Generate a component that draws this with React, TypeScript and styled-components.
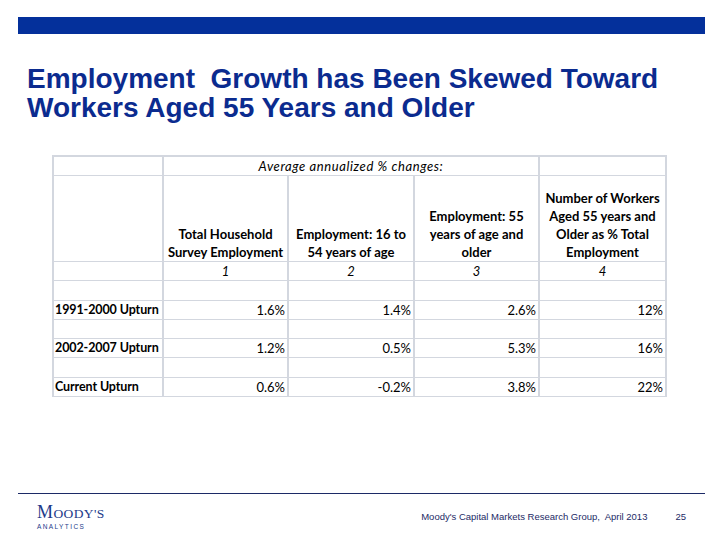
import React from "react";
import styled, { createGlobalStyle } from "styled-components";

const GlobalStyle = createGlobalStyle`
  html, body { margin: 0; padding: 0; background: #ffffff; }
  body { width: 720px; height: 540px; overflow: hidden; }
`;

const NAVY = "#0b2b8f";
const GRID = "#d3d7df";

const headers = [
  ["Total Household", "Survey Employment"],
  ["Employment: 16 to", "54 years of age"],
  ["Employment: 55", "years of age and", "older"],
  ["Number of Workers", "Aged 55 years and", "Older as % Total", "Employment"],
];

const rows = [
  { label: "1991-2000 Upturn", values: ["1.6%", "1.4%", "2.6%", "12%"] },
  { label: "2002-2007 Upturn", values: ["1.2%", "0.5%", "5.3%", "16%"] },
  { label: "Current Upturn", values: ["0.6%", "-0.2%", "3.8%", "22%"] },
];

export default function App() {
  return (
    <>
      <GlobalStyle />
      <Slide>
        <TopBar />
        <Title>
          Employment&nbsp; Growth has Been Skewed Toward
          <br />
          Workers Aged 55 Years and Older
        </Title>

        <Table>
          <colgroup>
            <col style={{ width: 110 }} />
            <col style={{ width: 125 }} />
            <col style={{ width: 126 }} />
            <col style={{ width: 125 }} />
            <col style={{ width: 127 }} />
          </colgroup>
          <tbody>
            <Row>
              <Cell />
              <Cell colSpan={3} $align="center" $italic $wide>
                Average annualized % changes:
              </Cell>
              <Cell />
            </Row>
            <HeadRow>
              <Cell />
              {headers.map((lines, i) => (
                <Cell key={i} $align="center" $bold $valign="bottom">
                  {lines.map((l, j) => (
                    <div key={j}>{l}</div>
                  ))}
                </Cell>
              ))}
            </HeadRow>
            <Row>
              <Cell />
              {[1, 2, 3, 4].map((n) => (
                <Cell key={n} $align="center" $italic>
                  {n}
                </Cell>
              ))}
            </Row>
            {rows.map((r) => (
              <React.Fragment key={r.label}>
                <Row>
                  <Cell />
                  <Cell />
                  <Cell />
                  <Cell />
                  <Cell />
                </Row>
                <Row>
                  <Label>{r.label}</Label>
                  {r.values.map((v, i) => (
                    <Cell key={i} $align="right">
                      {v}
                    </Cell>
                  ))}
                </Row>
              </React.Fragment>
            ))}
          </tbody>
        </Table>

        <Footer>
          <Logo>
            <LogoMark>
              M<small>OODY'S</small>
            </LogoMark>
            <LogoSub>ANALYTICS</LogoSub>
          </Logo>
          <FooterText>Moody's Capital Markets Research Group,&nbsp; April 2013</FooterText>
          <PageNum>25</PageNum>
        </Footer>
      </Slide>
    </>
  );
}

const Slide = styled.div`
  width: 720px;
  height: 540px;
  display: flex;
  flex-direction: column;
  font-family: "Liberation Sans", Arial, sans-serif;
`;

const TopBar = styled.div`
  margin: 17px 15px 0 18px;
  height: 17px;
  background: #04309b;
`;

const Title = styled.h1`
  margin: 30px 0 0 27px;
  font-family: "Liberation Sans", Arial, sans-serif;
  font-weight: bold;
  font-size: 28px;
  line-height: 29px;
  color: ${NAVY};
  letter-spacing: 0;
`;

const Table = styled.table`
  margin: 33px 0 0 52px;
  border-collapse: collapse;
  table-layout: fixed;
  width: 613px;
  font-family: Lato, "Liberation Sans", sans-serif;
  font-size: 13px;
  color: #000;
  border-top: 2px solid ${GRID};
`;

const Row = styled.tr`
  height: 19.3px;
`;

const HeadRow = styled.tr`
  height: 86px;
`;

const Cell = styled.td<{
  $align?: "left" | "center" | "right";
  $bold?: boolean;
  $italic?: boolean;
  $wide?: boolean;
  $valign?: "middle" | "bottom";
}>`
  padding: 0 2px;
  border-left: 2px solid ${GRID};
  border-right: 2px solid ${GRID};
  border-top: 1px solid ${GRID};
  border-bottom: 1px solid ${GRID};
  text-align: ${(p) => p.$align || "left"};
  font-weight: ${(p) => (p.$bold ? 700 : 400)};
  font-style: ${(p) => (p.$italic ? "italic" : "normal")};
  letter-spacing: ${(p) => (p.$wide ? "0.6px" : "normal")};
  vertical-align: ${(p) => p.$valign || "middle"};
  line-height: 18px;
  white-space: nowrap;
  overflow: hidden;
`;

const Label = styled(Cell)`
  font-weight: 700;
  font-size: 12.5px;
  letter-spacing: -0.1px;
  padding-left: 1px;
`;

const Footer = styled.div`
  margin: auto 15px 0 18px;
  height: 46px;
  border-top: 1px solid #1c2a66;
  display: flex;
  align-items: flex-start;
`;

const Logo = styled.div`
  margin: 9px 0 0 19px;
  display: flex;
  flex-direction: column;
  color: #1d3a8a;
`;

const LogoMark = styled.div`
  font-family: "Liberation Serif", "Times New Roman", serif;
  font-size: 18px;
  line-height: 18px;
  letter-spacing: 0.4px;
  small {
    font-size: 13.5px;
  }
`;

const LogoSub = styled.div`
  margin-top: 0;
  font-family: "Liberation Sans", Arial, sans-serif;
  font-size: 6.5px;
  letter-spacing: 1.4px;
  color: #1d3a8a;
`;

const FooterText = styled.div`
  margin: 17px 0 0 auto;
  font-size: 9.5px;
  color: #1c2a66;
`;

const PageNum = styled.div`
  margin: 17px 19px 0 28px;
  font-size: 9.5px;
  color: #1c2a66;
`;
